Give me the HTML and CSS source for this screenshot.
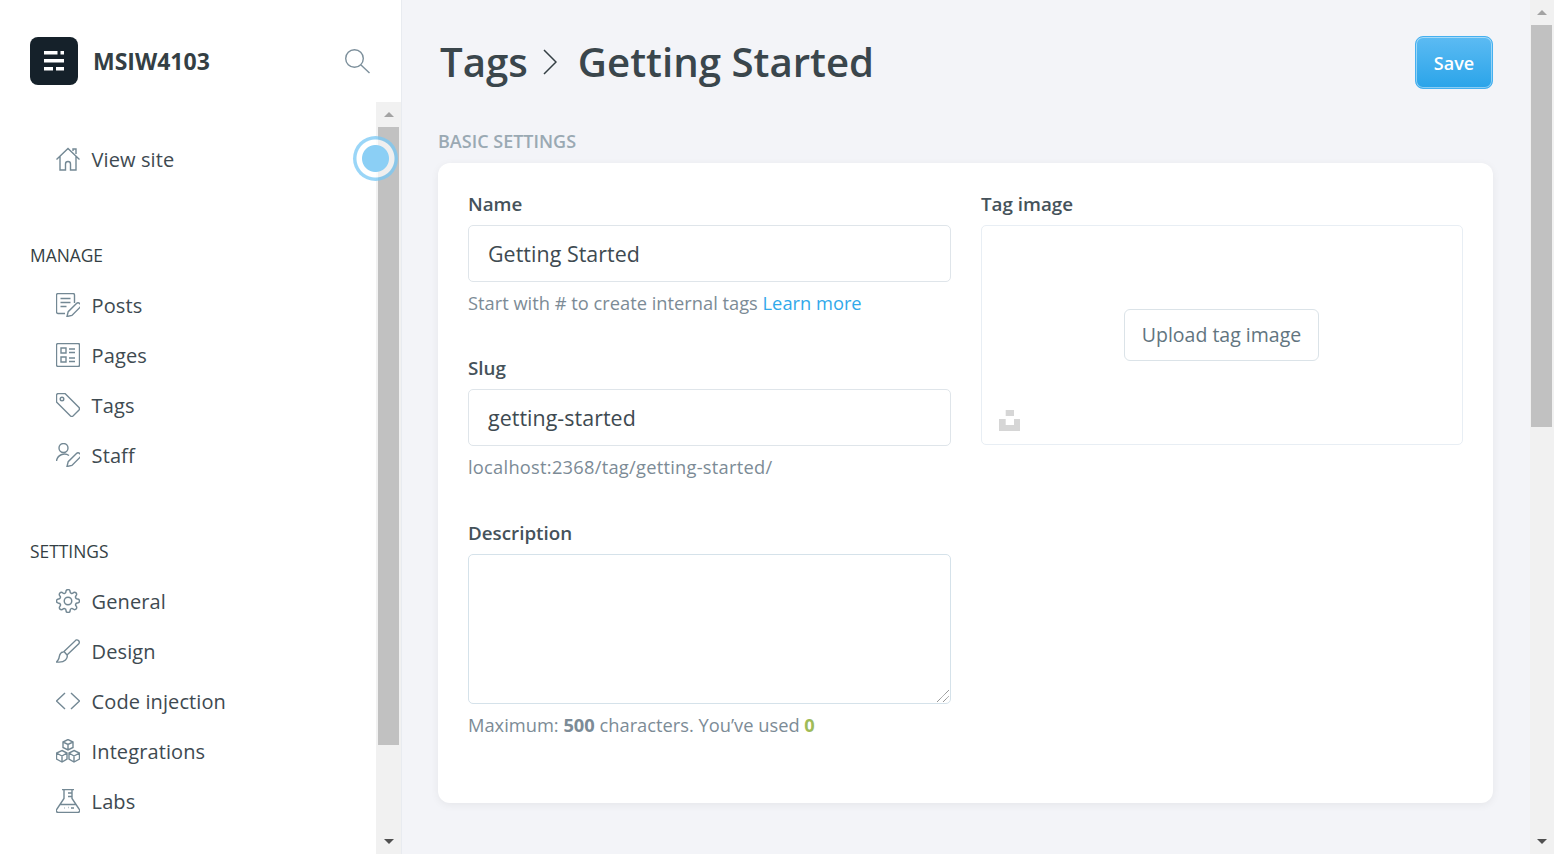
FILE: index.html
```html
<!DOCTYPE html>
<html lang="en">
<head>
  <meta charset="UTF-8">
  <title>Tags - Getting Started</title>
  <link rel="stylesheet" href="styles.css">
</head>
<body>
  <aside class="sidebar">
    <div class="brand">
      <div class="brand-left">
        <svg class="logo" viewBox="0 0 48 48" width="48" height="48">
          <rect width="48" height="48" rx="8" fill="#15212a"/>
          <g fill="#fff">
            <rect x="14" y="14" width="13.500" height="3.500"/><rect x="30.500" y="14" width="3.500" height="3.500"/>
            <rect x="14" y="22" width="20" height="3.500"/>
            <rect x="14" y="30" width="9" height="3.500"/><rect x="26" y="30" width="8" height="3.500"/>
          </g>
        </svg>
        <span class="brand-name">MSIW4103</span>
      </div>
      <svg class="search" viewBox="0 0 26 26" width="26" height="26">
        <circle cx="9.500" cy="9.500" r="8.800"/><path d="M16 16l8.500 8"/>
      </svg>
    </div>
    <div class="side-body">
      <nav class="nav">
        <ul class="menu first">
          <li><svg viewBox="0 0 24 24"><path d="M.5 12.500L12 1.500l11.500 11M4 9.500v13.500h5.500v-6a2.500 2.500 0 0 1 5 0v6H20V9.500M17 4V2h3v5"/></svg>View site</li>
        </ul>
        <h3 class="menu-title">MANAGE</h3>
        <ul class="menu">
          <li><svg viewBox="0 0 24 24"><path d="M9 20.500H2A1.500 1.500 0 0 1 .5 19V2A1.500 1.500 0 0 1 2 .5h15A1.500 1.500 0 0 1 18.500 2v8M4.500 5.500h10M4.500 9.500h10M4.500 13.500h6M11 23.500l1.200-4.800 8-8a2.600 2.600 0 0 1 3.700 3.700l-8 8z"/></svg>Posts</li>
          <li><svg viewBox="0 0 24 24"><rect x=".5" y=".5" width="23" height="23" rx="1.500"/><path d="M5 5h5v5H5zM5 14h5v5H5zM13 6h6M13 9.500h6M13 15h6M13 18.500h6"/></svg>Pages</li>
          <li><svg viewBox="0 0 24 24"><path d="M.5 2.500A2 2 0 0 1 2.500.5H9l14 14a2 2 0 0 1 0 2.500L17 23a2 2 0 0 1-2.500 0L.5 9z"/><circle cx="6" cy="6" r="1.800"/></svg>Tags</li>
          <li><svg viewBox="0 0 24 24"><circle cx="7.500" cy="5" r="4.500"/><path d="M.5 18a8 8 0 0 1 12.500-5.500M11 23.500l1.200-4.800 8-8a2.600 2.600 0 0 1 3.700 3.700l-8 8z"/></svg>Staff</li>
        </ul>
        <h3 class="menu-title">SETTINGS</h3>
        <ul class="menu">
          <li><svg viewBox="0.500 0.500 23 23"><circle cx="12" cy="12" r="3.600"/><path d="M19.400 15a1.650 1.650 0 0 0 .33 1.820l.06.06a2 2 0 0 1 0 2.830 2 2 0 0 1-2.830 0l-.06-.06a1.650 1.650 0 0 0-1.820-.33 1.650 1.650 0 0 0-1 1.510V21a2 2 0 0 1-2 2 2 2 0 0 1-2-2v-.09A1.650 1.650 0 0 0 9 19.400a1.650 1.650 0 0 0-1.820.33l-.06.06a2 2 0 0 1-2.830 0 2 2 0 0 1 0-2.830l.06-.06a1.650 1.650 0 0 0 .33-1.820 1.650 1.650 0 0 0-1.510-1H3a2 2 0 0 1-2-2 2 2 0 0 1 2-2h.09A1.650 1.650 0 0 0 4.600 9a1.650 1.650 0 0 0-.33-1.820l-.06-.06a2 2 0 0 1 0-2.830 2 2 0 0 1 2.830 0l.06.06a1.650 1.650 0 0 0 1.820.33H9a1.650 1.650 0 0 0 1-1.510V3a2 2 0 0 1 2-2 2 2 0 0 1 2 2v.09a1.650 1.650 0 0 0 1 1.510 1.650 1.650 0 0 0 1.820-.33l.06-.06a2 2 0 0 1 2.830 0 2 2 0 0 1 0 2.830l-.06.06a1.650 1.650 0 0 0-.33 1.820V9a1.650 1.650 0 0 0 1.510 1H21a2 2 0 0 1 2 2 2 2 0 0 1-2 2h-.09a1.650 1.650 0 0 0-1.510 1z"/></svg>General</li>
          <li><svg viewBox="0 0 24 24"><path d="M8 12.500L20 1a2.500 2.500 0 0 1 3 3.500L11 16zM7.500 13c-4 0-4 4-4.500 6-.3 1.500-1.500 3-2.500 4 4 .5 7.500-.5 9-2 2-2 2-4 1.500-5.500"/></svg>Design</li>
          <li><svg viewBox="0 0 24 24"><path d="M9 4l-8.500 8L9 20M15 4l8.500 8-8.500 8"/></svg>Code injection</li>
          <li><svg viewBox="0 0 24 24"><path d="M12 .5l5 2.500v5.500l-5 2.500-5-2.500V3zM7 3l5 2.500L17 3M12 5.500V11M6 11.500l5 2.500v6l-5 3-5.500-3v-6zM.5 14l5.500 3 5-3M6 17v6M18 11.500l5.500 2.500v6L18 23l-5-3v-6zM13 14l5 3 5.500-3M18 17v6"/></svg>Integrations</li>
          <li><svg viewBox="0 0 24 24"><path d="M6 .5h12M8 .5v9L1 20a2 2 0 0 0 1.500 3.500h19A2 2 0 0 0 23 20L16 9.500v-9M12 4h4M12 7.500h4M4.500 15.500h15M8 19h.5M12 18.500h.5M15 19h3"/></svg>Labs</li>
        </ul>
      </nav>
      <div class="scrollbar side-bar">
        <span class="arrow up"></span>
        <div class="thumb side-thumb"></div>
        <span class="arrow down"></span>
      </div>
    </div>
    <div class="focus-dot"></div>
  </aside>

  <main class="main">
    <div class="content">
      <header class="page-head">
        <h1>Tags
          <svg class="crumb" viewBox="0 0 14 26" width="14" height="26"><path d="M1 1l12 12L1 25"/></svg>
          Getting Started</h1>
        <button class="save">Save</button>
      </header>
      <h4 class="section-title">BASIC SETTINGS</h4>
      <section class="card">
        <div class="col-left">
          <div class="field">
            <label>Name</label>
            <div class="input">Getting Started</div>
            <p class="hint">Start with # to create internal tags <a>Learn more</a></p>
          </div>
          <div class="field">
            <label>Slug</label>
            <div class="input">getting-started</div>
            <p class="hint url">localhost:2368/tag/getting-started/</p>
          </div>
          <div class="field desc">
            <label>Description</label>
            <div class="area-wrap">
              <textarea class="area"></textarea>
              <svg class="grip" viewBox="0 0 12 12" width="12" height="12"><path d="M0 12L12 0M6 12l6-6"/></svg>
            </div>
            <p class="hint">Maximum: <b>500</b> characters. You’ve used <b class="used">0</b></p>
          </div>
        </div>
        <div class="col-right">
          <label>Tag image</label>
          <div class="image-box">
            <button class="upload">Upload tag image</button>
            <svg class="unsplash" viewBox="0 0 21 21" width="21" height="21"><path d="M6.700 0H15v6H6.700zM0 9h6.700v6H15V9h6v12H0z"/></svg>
          </div>
        </div>
      </section>
    </div>
    <div class="scrollbar main-bar">
      <span class="arrow up"></span>
      <div class="thumb main-thumb"></div>
      <span class="arrow down"></span>
    </div>
  </main>
</body>
</html>
```

FILE: styles.css
```css
* {
  box-sizing: border-box;
}
html, body {
  height: 100%;
}
body {
  margin: 0;
  display: flex;
  height: 854px;
  overflow: hidden;
  font-family: "Open Sans", "Noto Sans", sans-serif;
  color: #394047;
  background: #f3f4f8;
}
.sidebar {
  position: relative;
  width: 402px;
  flex: none;
  display: flex;
  flex-direction: column;
  background: #fff;
  border-right: 1px solid #e8ebf0;
}
.brand {
  height: 102px;
  flex: none;
  display: flex;
  align-items: center;
  justify-content: space-between;
  padding: 19px 30px 0 30px;
}
.brand-left {
  display: flex;
  align-items: center;
  gap: 15px;
}
.brand-name {
  font-size: 23px;
  font-weight: 700;
  color: #343f44;
}
.search {
  margin-top: 2px;
  fill: none;
  stroke: #7c8f9b;
  stroke-width: 1.4;
}
.side-body {
  flex: 1;
  display: flex;
  min-height: 0;
}
.nav {
  flex: 1;
  padding: 32px 0 0 30px;
}
.menu {
  list-style: none;
  margin: 0;
  padding: 0;
}
.menu li {
  display: flex;
  align-items: center;
  height: 50px;
  padding-left: 26px;
  gap: 11.600px;
  font-size: 20px;
  letter-spacing: .1px;
  color: #3e4a51;
}
.menu svg {
  width: 24px;
  height: 24px;
  fill: none;
  stroke: #738894;
  stroke-width: 1.4;
  flex: none;
}
.menu-title {
  margin: 0;
  font-size: 17.400px;
  font-weight: 400;
  color: #343f44;
  height: 21px;
  line-height: 21px;
}
.menu.first {
  margin-bottom: 61px;
}
.menu + .menu-title + .menu {
  margin-top: 14px;
}
.menu + .menu-title + .menu + .menu-title {
  margin-top: 61px;
}
.scrollbar {
  flex: none;
  display: flex;
  flex-direction: column;
  align-items: center;
  background: #f1f1f1;
}
.side-bar {
  width: 25px;
}
.main-bar {
  width: 24px;
}
.arrow {
  flex: none;
  width: 17px;
  height: 25px;
  display: flex;
  align-items: center;
  justify-content: center;
}
.arrow::before {
  content: "";
  border-left: 5.500px solid transparent;
  border-right: 5.500px solid transparent;
}
.arrow.up::before {
  border-bottom: 5px solid #a3a3a3;
}
.arrow.down::before {
  border-top: 5px solid #505050;
}
.thumb {
  flex: none;
  background: #c1c1c1;
}
.side-thumb {
  width: 21px;
  height: 618px;
}
.main-thumb {
  width: 21px;
  height: 402px;
  margin-right: 2px;
}
.scrollbar .thumb + .arrow {
  margin-top: auto;
}
.focus-dot {
  position: absolute;
  left: 353px;
  top: 136px;
  width: 45px;
  height: 45px;
  border-radius: 50%;
  background: radial-gradient(circle, #8bcff5 0 13px, rgba(255,255,255,.75) 14px 18.500px, rgba(120,200,245,.75) 19.500px);
}
.main {
  flex: 1;
  display: flex;
  min-width: 0;
}
.content {
  flex: 1;
  padding: 0 37px 0 36px;
  min-width: 0;
}
.page-head {
  height: 124px;
  display: flex;
  align-items: center;
  justify-content: space-between;
}
h1 {
  margin: 0 0 1px;
  padding-left: 2px;
  font-size: 40.200px;
  font-weight: 600;
  color: #3a464c;
  display: flex;
  align-items: center;
  gap: 15px;
}
.crumb {
  margin-right: 6px;
  fill: none;
  stroke: #343f44;
  stroke-width: 1.5;
}
.save {
  width: 78px;
  height: 53px;
  padding-top: 2px;
  border: 1px solid #45b0f0;
  border-radius: 8px;
  box-shadow: inset 0 0 0 1px rgba(255,255,255,.45);
  background: linear-gradient(#5cbbf3, #2aa4e9);
  color: #fff;
  font: 600 18px "Open Sans", "Noto Sans", sans-serif;
}
.section-title {
  margin: 3px 0 8px;
  font-size: 18px;
  font-weight: 600;
  line-height: 28px;
  color: #9aa9b3;
}
.card {
  height: 640px;
  padding: 30px 30px 0;
  display: grid;
  grid-template-columns: 483px 482px;
  column-gap: 30px;
  background: #fff;
  border-radius: 12px;
  box-shadow: 0 2px 8px rgba(0,0,0,.06);
}
.field {
  margin-bottom: 42px;
}
.field.desc {
  padding-top: 1px;
}
label {
  display: block;
  font-size: 18.800px;
  font-weight: 600;
  line-height: 22px;
  margin-bottom: 10px;
  color: #45525a;
}
.input {
  height: 57px;
  padding: 0 19px;
  display: flex;
  align-items: center;
  font-size: 21.400px;
  letter-spacing: .05px;
  color: #3e4a51;
  border: 1px solid #dfe5ea;
  border-radius: 5px;
}
.area-wrap {
  position: relative;
}
.area {
  display: block;
  width: 100%;
  height: 150px;
  border: 1px solid #d5e2ea;
  border-radius: 5px;
  background: #fff;
  resize: none;
}
.grip {
  position: absolute;
  right: 2px;
  bottom: 2px;
  fill: none;
  stroke: #6a6a6a;
  stroke-width: 1;
  stroke-dasharray: 1 .6;
}
.hint {
  margin: 9px 0 0;
  font-size: 18.300px;
  line-height: 24px;
  color: #7c8b96;
}
.hint.url {
  letter-spacing: .25px;
}
.hint a {
  color: #31a9ea;
}
.hint b {
  font-weight: 700;
}
.used {
  color: #9fbb58;
}
.image-box {
  position: relative;
  height: 220px;
  display: flex;
  align-items: center;
  justify-content: center;
  border: 1px solid #e8eef4;
  border-radius: 5px;
}
.upload {
  width: 195px;
  height: 52px;
  margin-right: 1px;
  padding-bottom: 3px;
  border: 1px solid #dbe3e8;
  border-radius: 6px;
  background: #fff;
  color: #62757f;
  font: 400 19.500px "Open Sans", "Noto Sans", sans-serif;
}
.unsplash {
  position: absolute;
  left: 17px;
  bottom: 13px;
  fill: #d6d6d6;
}
```
